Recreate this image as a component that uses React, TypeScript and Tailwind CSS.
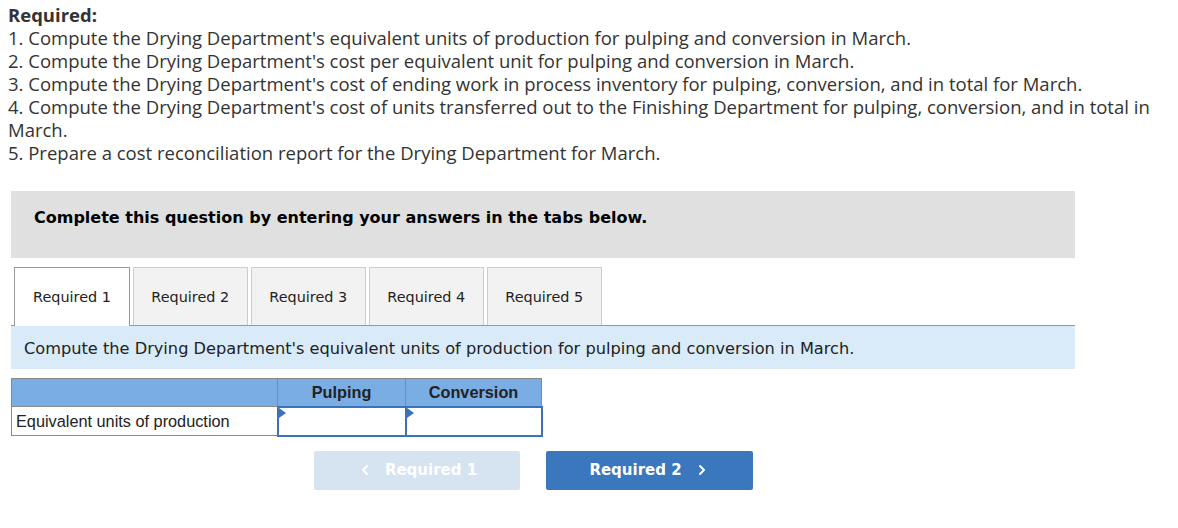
import { ChevronLeft, ChevronRight } from "lucide-react";

const steps = [
  "1. Compute the Drying Department's equivalent units of production for pulping and conversion in March.",
  "2. Compute the Drying Department's cost per equivalent unit for pulping and conversion in March.",
  "3. Compute the Drying Department's cost of ending work in process inventory for pulping, conversion, and in total for March.",
  "4. Compute the Drying Department's cost of units transferred out to the Finishing Department for pulping, conversion, and in total in March.",
  "5. Prepare a cost reconciliation report for the Drying Department for March.",
];

const tabs = ["Required 1", "Required 2", "Required 3", "Required 4", "Required 5"];

const InputCell = () => (
  <td className="relative h-[29px] border-2 border-[#3a73b8] bg-white p-0">
    <span className="absolute left-0 top-0 h-0 w-0 border-y-[5px] border-l-[7px] border-y-transparent border-l-[#3a73b8]" />
  </td>
);

export default function App() {
  return (
    <div className="min-h-[528px] bg-white text-[#333]">
      <div className="pl-2 pr-[14px] pt-[3px] font-['Open_Sans',sans-serif] text-[18.5px] leading-[23px]">
        <p className="font-bold">Required:</p>
        {steps.map((s) => (
          <p key={s}>{s}</p>
        ))}
      </div>

      <div className="ml-[11px] mt-[27px] w-[1064px]">
        <div className="h-[67px] bg-[#e0e0e0] pl-[23px] pt-[17px] font-['DejaVu_Sans',sans-serif] text-[16px] font-bold leading-[20px] text-black">
          Complete this question by entering your answers in the tabs below.
        </div>

        <div className="mt-[9px] flex gap-[2.5px] border-b border-[#999] pl-[3px] font-['DejaVu_Sans',sans-serif] text-[14.4px] text-[#222]">
          {tabs.map((t, i) => (
            <div
              key={t}
              className={
                i === 0
                  ? "-mb-px flex h-[59px] w-[116px] items-center justify-center border border-b-0 border-[#999] bg-white pt-[2px]"
                  : "flex h-[58px] w-[115.5px] items-center justify-center border border-b-0 border-[#ccc] bg-[#f2f2f2] pt-[2px]"
              }
            >
              {t}
            </div>
          ))}
        </div>

        <div className="flex h-[43px] items-center bg-[#d9ebf9] pl-[13px] pt-[4px] font-['DejaVu_Sans',sans-serif] text-[16.2px] text-[#222]">
          Compute the Drying Department's equivalent units of production for pulping and conversion in March.
        </div>

        <table className="mt-[9px] border-collapse font-['Liberation_Sans',sans-serif] text-[16.3px] text-[#222]">
          <thead>
            <tr className="h-[28px] bg-[#7aade4]">
              <th className="w-[266px] border border-[#888]" />
              <th className="w-[128px] border border-[#888] font-bold">Pulping</th>
              <th className="w-[136px] border border-[#888] font-bold">Conversion</th>
            </tr>
          </thead>
          <tbody>
            <tr>
              <td className="h-[29px] border border-[#888] pl-1 text-left">Equivalent units of production</td>
              <InputCell />
              <InputCell />
            </tr>
          </tbody>
        </table>

        <div className="mt-[14px] flex gap-[26px] pl-[303px] font-['DejaVu_Sans',sans-serif] text-[15px] font-bold text-white">
          <button className="flex h-[39px] w-[206px] items-center justify-center gap-3 rounded-[2px] bg-[#d6e3f1]">
            <ChevronLeft size={16} strokeWidth={3} />
            Required 1
          </button>
          <button className="flex h-[39px] w-[207px] items-center justify-center gap-3 rounded-[2px] bg-[#3a77bd]">
            Required 2
            <ChevronRight size={16} strokeWidth={3} />
          </button>
        </div>
      </div>
    </div>
  );
}
